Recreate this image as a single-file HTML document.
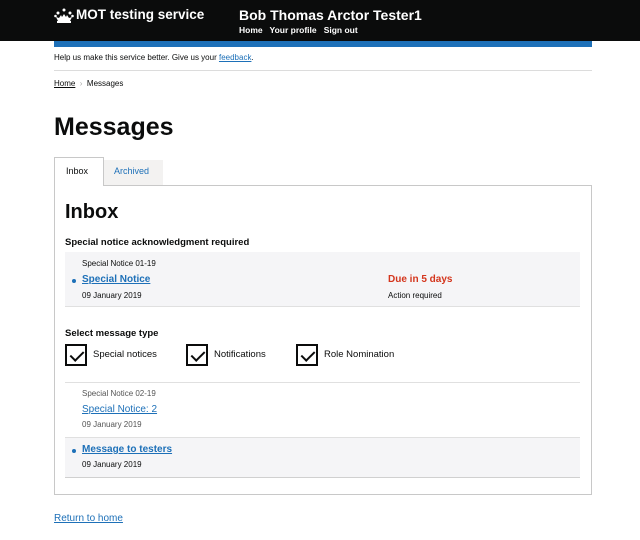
<!DOCTYPE html>
<html><head><meta charset="utf-8"><style>
*{margin:0;padding:0;box-sizing:border-box}
body{width:640px;height:540px;background:#fff;font-family:"Liberation Sans",Arial,sans-serif;color:#0b0c0c;position:relative;overflow:hidden}
.a{position:absolute;white-space:nowrap}
a{color:#1d70b8}
.hdr{position:absolute;left:0;top:0;width:640px;height:41px;background:#0b0c0c}
.cb{position:absolute;width:22px;height:22px;border:2px solid #0b0c0c;background:#fff}
.cb:after{content:"";position:absolute;left:6px;top:2px;width:6px;height:11px;border:solid #0b0c0c;border-width:0 2.5px 2.5px 0;transform:rotate(45deg)}
.dot{position:absolute;width:4px;height:4px;border-radius:50%;background:#1d70b8}
</style></head><body>
<div class="hdr"></div>
<svg class="a" style="left:54px;top:8px" width="20" height="15" viewBox="0 0 20 15"><g fill="#fff"><circle cx="10" cy="2" r="1.5"/><circle cx="4" cy="5" r="1.5"/><circle cx="16" cy="5" r="1.5"/><circle cx="1.5" cy="8" r="1.3"/><circle cx="18.5" cy="8" r="1.3"/><path d="M2 9l2 4h12l2-4-3 1-2-3-1 2-2-3-2 3-1-2-2 3z"/><rect x="3" y="13" width="14" height="2"/></g></svg>
<div class="a" style="left:76px;top:7px;font-size:13.5px;font-weight:bold;color:#fff">MOT testing service</div>
<div class="a" style="left:239px;top:7px;font-size:14px;font-weight:bold;color:#fff">Bob Thomas Arctor Tester1</div>
<div class="a" style="left:239px;top:25px;font-size:8.5px;font-weight:bold;color:#fff">Home &nbsp; Your profile &nbsp; Sign out</div>
<div class="a" style="left:54px;top:41px;width:538px;height:6px;background:#1d70b8"></div>
<div class="a" style="left:54px;top:53px;font-size:8px">Help us make this service better. Give us your <a href="#">feedback</a>.</div>
<div class="a" style="left:54px;top:70px;width:538px;height:1px;background:#dcdcdc"></div>
<div class="a" style="left:54px;top:79px;font-size:8px"><a href="#" style="color:#0b0c0c">Home</a> <span style="color:#aaa">&nbsp;›&nbsp;</span> Messages</div>
<div class="a" style="left:54px;top:113px;font-size:25px;font-weight:bold">Messages</div>
<div class="a" style="left:104px;top:160px;width:59px;height:25px;background:#f3f2f1"></div>
<div class="a" style="left:114px;top:166px;font-size:9px;color:#1d70b8">Archived</div>
<div class="a" style="left:54px;top:185px;width:538px;height:310px;border:1px solid #c8c8c8"></div>
<div class="a" style="left:54px;top:157px;width:50px;height:29px;background:#fff;border:1px solid #c8c8c8;border-bottom:none"></div>
<div class="a" style="left:66px;top:166px;font-size:9px">Inbox</div>
<div class="a" style="left:65px;top:201px;font-size:20px;font-weight:bold">Inbox</div>
<div class="a" style="left:65px;top:237px;font-size:9.5px;font-weight:bold">Special notice acknowledgment required</div>
<div class="a" style="left:65px;top:252px;width:515px;height:55px;background:#f5f5f7;border-bottom:1px solid #e0e0e0"></div>
<div class="a" style="left:82px;top:259px;font-size:8px">Special Notice 01-19</div>
<div class="dot" style="left:72px;top:279px"></div>
<div class="a" style="left:82px;top:274px;font-size:10px;font-weight:bold"><a href="#">Special Notice</a></div>
<div class="a" style="left:82px;top:291px;font-size:8px">09 January 2019</div>
<div class="a" style="left:388px;top:274px;font-size:10px;font-weight:bold;color:#d4351c">Due in 5 days</div>
<div class="a" style="left:388px;top:291px;font-size:8px">Action required</div>
<div class="a" style="left:65px;top:328px;font-size:9.5px;font-weight:bold">Select message type</div>
<div class="cb" style="left:65px;top:344px"></div>
<div class="a" style="left:93px;top:349px;font-size:9.5px">Special notices</div>
<div class="cb" style="left:186px;top:344px"></div>
<div class="a" style="left:214px;top:349px;font-size:9.5px">Notifications</div>
<div class="cb" style="left:296px;top:344px"></div>
<div class="a" style="left:324px;top:349px;font-size:9.5px">Role Nomination</div>
<div class="a" style="left:65px;top:382px;width:515px;height:1px;background:#e0e0e0"></div>
<div class="a" style="left:82px;top:389px;font-size:8px;color:#555">Special Notice 02-19</div>
<div class="a" style="left:82px;top:404px;font-size:10px"><a href="#">Special Notice: 2</a></div>
<div class="a" style="left:82px;top:420px;font-size:8px;color:#555">09 January 2019</div>
<div class="a" style="left:65px;top:437px;width:515px;height:41px;background:#f5f5f7;border-top:1px solid #e0e0e0;border-bottom:1px solid #d0d0d0"></div>
<div class="dot" style="left:72px;top:449px"></div>
<div class="a" style="left:82px;top:444px;font-size:10px;font-weight:bold"><a href="#">Message to testers</a></div>
<div class="a" style="left:82px;top:460px;font-size:8px">09 January 2019</div>
<div class="a" style="left:54px;top:513px;font-size:10px"><a href="#">Return to home</a></div>
</body></html>
